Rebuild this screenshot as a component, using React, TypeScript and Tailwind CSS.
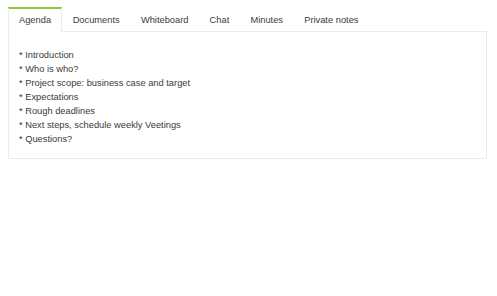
const tabs = ["Agenda", "Documents", "Whiteboard", "Chat", "Minutes", "Private notes"];

const agenda = [
  "* Introduction",
  "* Who is who?",
  "* Project scope: business case and target",
  "* Expectations",
  "* Rough deadlines",
  "* Next steps, schedule weekly Veetings",
  "* Questions?",
];

export default function App() {
  return (
    <div className="w-[497px] h-[296px] bg-white px-2 pt-[7px] font-['Liberation_Sans',Arial,sans-serif] text-[9.3px] text-[#3a3a3a]">
      <ul className="flex relative z-10">
        {tabs.map((t, i) =>
          i === 0 ? (
            <li
              key={t}
              className="px-[10px] h-[25px] pt-[5px] border-t-2 border-t-[#8cc63f] border-x border-x-[#ececec] bg-white mb-[-1px]"
            >
              {t}
            </li>
          ) : (
            <li key={t} className="px-[9.6px] h-[24px] pt-[7px] border-x border-x-transparent">
              {t}
            </li>
          )
        )}
      </ul>
      <div className="w-[479px] h-[128px] border border-[#ececec] px-[10px] pt-[16px]">
        {agenda.map((line) => (
          <div key={line} className="leading-[14px]">
            {line}
          </div>
        ))}
      </div>
    </div>
  );
}
